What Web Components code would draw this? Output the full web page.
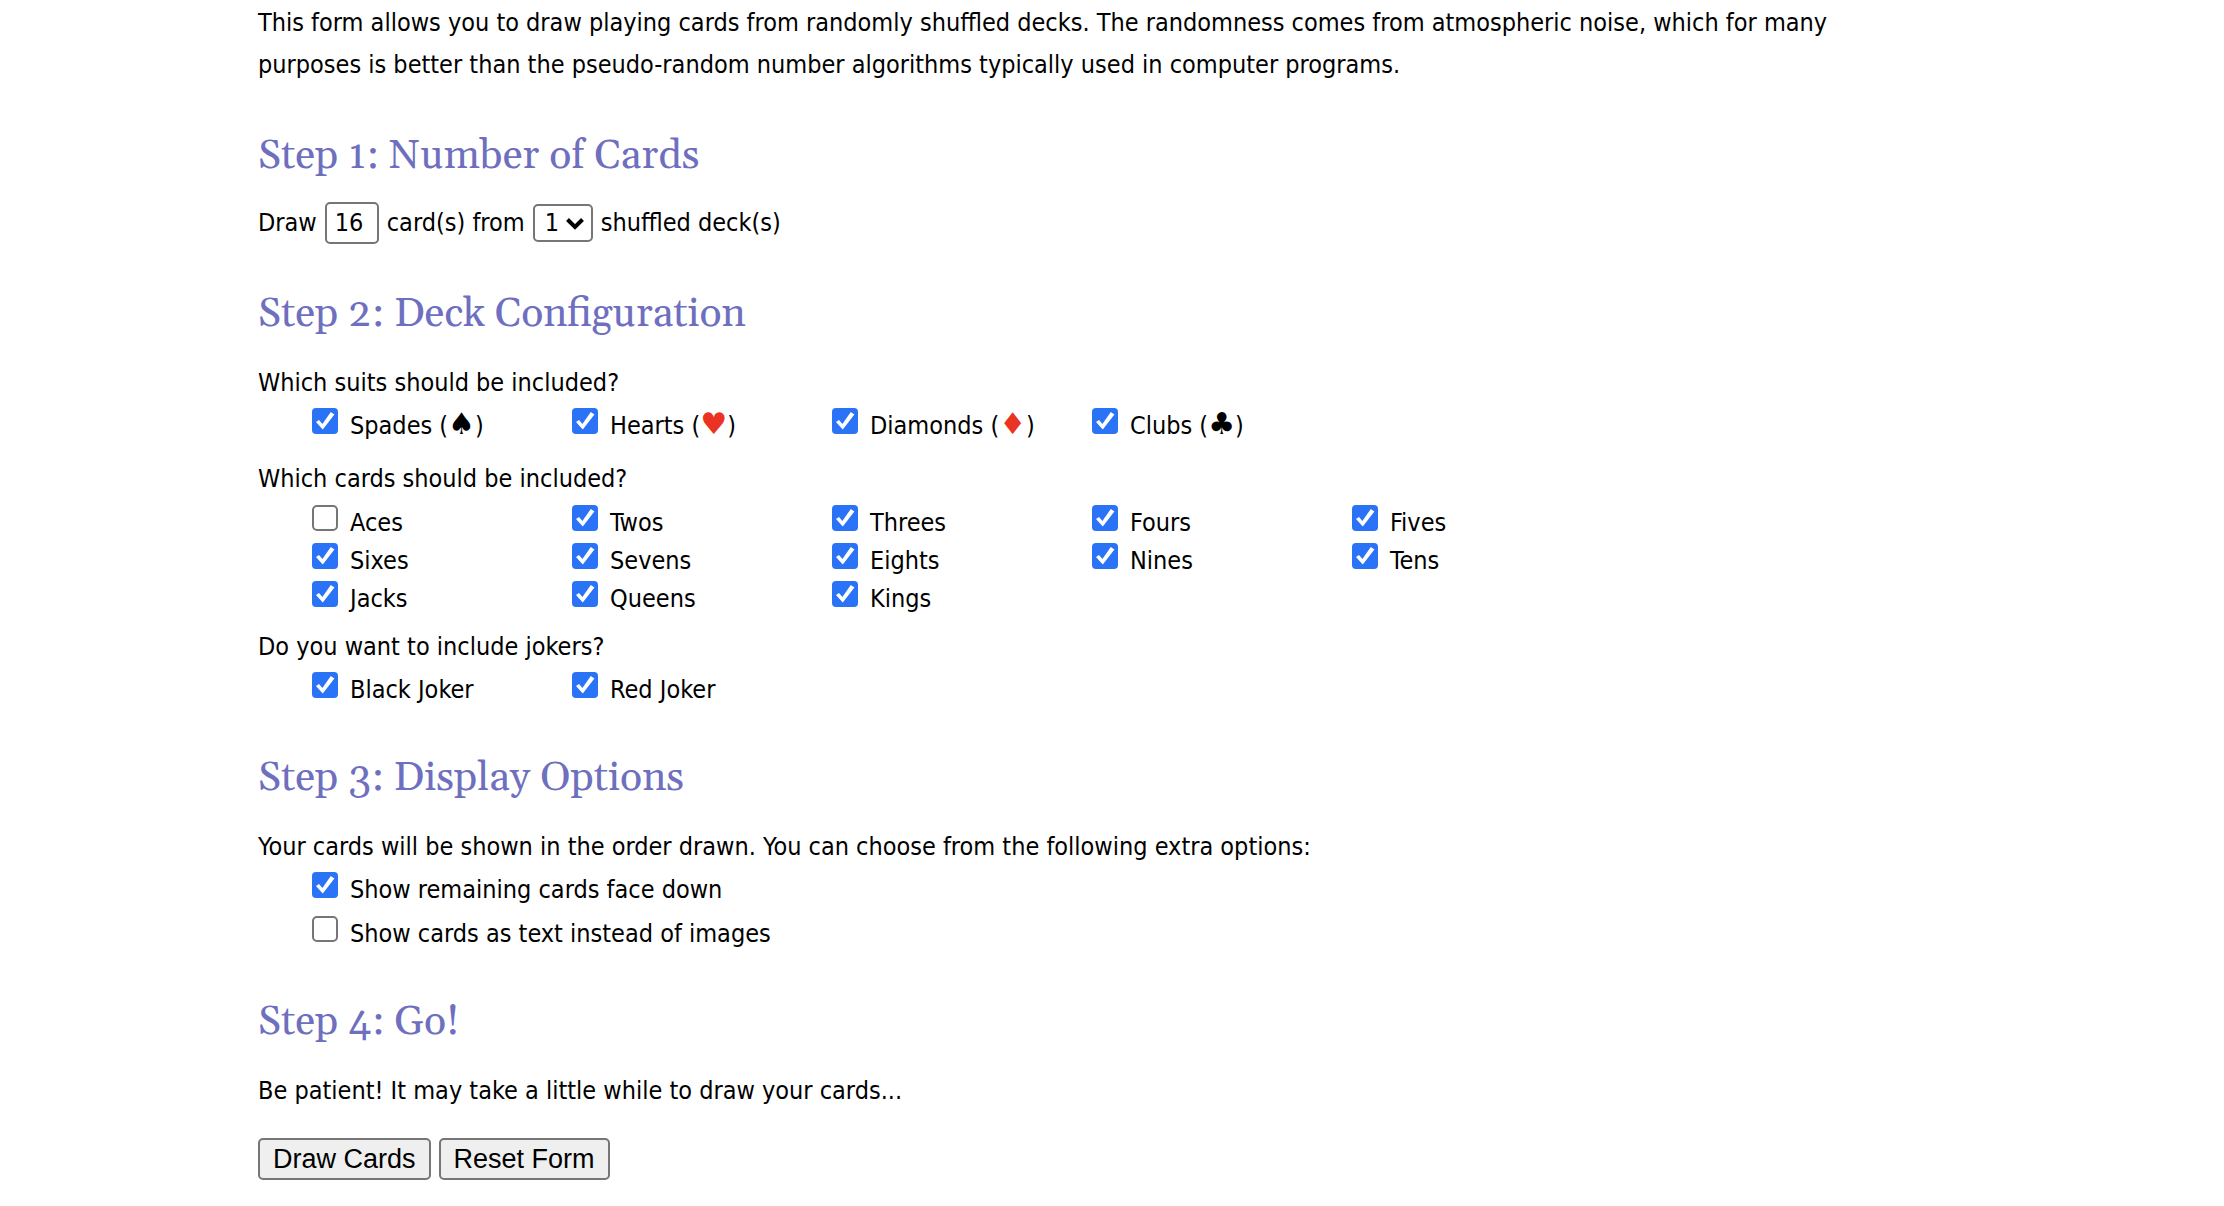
<!DOCTYPE html>
<html lang="en">
<head>
<meta charset="utf-8">
<title>Playing Card Shuffler</title>
<style>
  body { margin: 0; background: #fff; }
</style>
</head>
<body>
<card-shuffler></card-shuffler>

<script>
const define = (name, html, setup) => {
  const template = document.createElement('template');
  template.innerHTML = html.trim();
  customElements.define(name, class extends HTMLElement {
    constructor() {
      super();
      this.attachShadow({ mode: 'open' }).append(template.content.cloneNode(true));
    }
    connectedCallback() { if (setup) setup(this, this.shadowRoot); }
  });
};

/* A numbered step: serif heading with its controls below */
define('form-step', `
  <style>
    :host { display: block; margin-top: 44px; }
    h2 {
      margin: 0 0 20px;
      font: 400 41px/52px Georgia, Gelasio, "Liberation Serif", serif;
      color: #6f6fc0;
    }
  </style>
  <section><h2></h2><slot></slot></section>
`, (host, root) => { root.querySelector('h2').textContent = host.getAttribute('heading'); });

/* A question followed by a grid of options */
define('option-group', `
  <style>
    :host { display: block; }
    :host([compact]) { --row: 38px; --lead: 4px; --trail: 6px; }
    p { margin: 0; padding-top: 2px; }
    .grid {
      display: grid;
      grid-template-columns: repeat(5, 260px);
      grid-auto-rows: var(--row, 44px);
      padding: var(--lead, 0) 0 var(--trail, 8px) 54px;
      line-height: var(--row, 44px);
    }
    :host([stacked]) .grid { grid-template-columns: 1fr; }
  </style>
  <div role="group" aria-labelledby="question">
    <p id="question"></p>
    <div class="grid"><slot></slot></div>
  </div>
`, (host, root) => { root.querySelector('p').textContent = host.getAttribute('question'); });

/* A tick box with its label */
define('check-option', `
  <style>
    :host { display: block; white-space: nowrap; }
    label { display: inline-flex; align-items: baseline; gap: 12px; }
    input {
      appearance: none;
      box-sizing: border-box;
      width: 26px; height: 26px;
      margin: 0;
      border: 2px solid #767676;
      border-radius: 5px;
      background: #fff;
    }
    input:checked { border: 0; border-radius: 4px; background: #2b73f6; }
    input:checked::before {
      content: "";
      display: block;
      width: 26px; height: 26px;
      background: #fff;
      clip-path: polygon(4px 14px, 7px 12px, 10.4px 16px, 18.8px 4px, 22.4px 6.4px, 10.8px 21.4px);
    }
  </style>
  <label><input type="checkbox"><span><slot></slot></span></label>
`, (host, root) => { root.querySelector('input').checked = host.hasAttribute('checked'); });

/* A suit symbol, black or red */
define('suit-symbol', `<style>
    :host { font-family: "DejaVu Sans", sans-serif; font-size: 30px; line-height: 1; }
    :host([red]) { color: #eb3323; }
  </style><slot></slot>`);

/* Sentence with the card count and deck count controls */
define('draw-count', `
  <style>
    :host { display: flex; align-items: center; gap: 8px; height: 42px; }
    input, select {
      box-sizing: border-box;
      margin: 0;
      font: inherit;
      color: #000;
      background: #fff;
      border: 2px solid #767676;
      border-radius: 5px;
    }
    input { width: 54px; height: 42px; padding: 0 8px; }
    .select { position: relative; display: flex; }
    select { appearance: none; width: 60px; height: 38px; padding: 0 0 0 10px; line-height: 34px; }
    svg { position: absolute; right: 8px; top: 13px; pointer-events: none; }
  </style>
  <label for="cards">Draw</label>
  <input id="cards" type="text" value="16">
  <label for="decks">card(s) from</label>
  <span class="select">
    <select id="decks"><option>1</option><option>2</option><option>3</option><option>4</option></select>
    <svg width="20" height="14" viewBox="0 0 20 14" fill="none" stroke="#000" stroke-width="4" aria-hidden="true"><path d="M2.5 2.5 10 10l7.5-7.5"/></svg>
  </span>
  <span>shuffled deck(s)</span>
`);

define('form-actions', `
  <style>
    :host { display: flex; gap: 8px; margin-top: 26px; }
    button {
      height: 42px;
      margin: 0;
      padding: 0 13px;
      font: 27px/38px Arial, "Liberation Sans", sans-serif;
      color: #000;
      background: #efefef;
      border: 2px solid #767676;
      border-radius: 5px;
    }
  </style>
  <button type="submit">Draw Cards</button>
  <button type="reset">Reset Form</button>
`);

define('card-shuffler', `
  <style>
    :host {
      display: block;
      max-width: 1640px;
      padding: 0 16px 26px 258px;
      font: 25px/42px Tahoma, "DejaVu Sans Condensed", sans-serif;
      color: #000;
    }
    p { margin: 0; padding-top: 2px; }
    .after-grid { margin-top: 32px; }
  </style>
  <main>
    <p>This form allows you to draw playing cards from randomly shuffled decks. The randomness comes from atmospheric noise, which for many purposes is better than the pseudo-random number algorithms typically used in computer programs.</p>
    <form-step heading="Step 1: Number of Cards"><draw-count></draw-count></form-step>
    <form-step heading="Step 2: Deck Configuration">
      <option-group question="Which suits should be included?">
        <check-option checked>Spades (<suit-symbol>♠</suit-symbol>)</check-option>
        <check-option checked>Hearts (<suit-symbol red>♥</suit-symbol>)</check-option>
        <check-option checked>Diamonds (<suit-symbol red>♦</suit-symbol>)</check-option>
        <check-option checked>Clubs (<suit-symbol>♣</suit-symbol>)</check-option>
      </option-group>
      <option-group compact question="Which cards should be included?">
        <check-option>Aces</check-option>
        <check-option checked>Twos</check-option>
        <check-option checked>Threes</check-option>
        <check-option checked>Fours</check-option>
        <check-option checked>Fives</check-option>
        <check-option checked>Sixes</check-option>
        <check-option checked>Sevens</check-option>
        <check-option checked>Eights</check-option>
        <check-option checked>Nines</check-option>
        <check-option checked>Tens</check-option>
        <check-option checked>Jacks</check-option>
        <check-option checked>Queens</check-option>
        <check-option checked>Kings</check-option>
      </option-group>
      <option-group question="Do you want to include jokers?">
        <check-option checked>Black Joker</check-option>
        <check-option checked>Red Joker</check-option>
      </option-group>
    </form-step>
    <form-step class="after-grid" heading="Step 3: Display Options">
      <option-group stacked question="Your cards will be shown in the order drawn. You can choose from the following extra options:">
        <check-option checked>Show remaining cards face down</check-option>
        <check-option>Show cards as text instead of images</check-option>
      </option-group>
    </form-step>
    <form-step class="after-grid" heading="Step 4: Go!">
      <p>Be patient! It may take a little while to draw your cards...</p>
      <form-actions></form-actions>
    </form-step>
  </main>
`);
</script>
</body>
</html>
